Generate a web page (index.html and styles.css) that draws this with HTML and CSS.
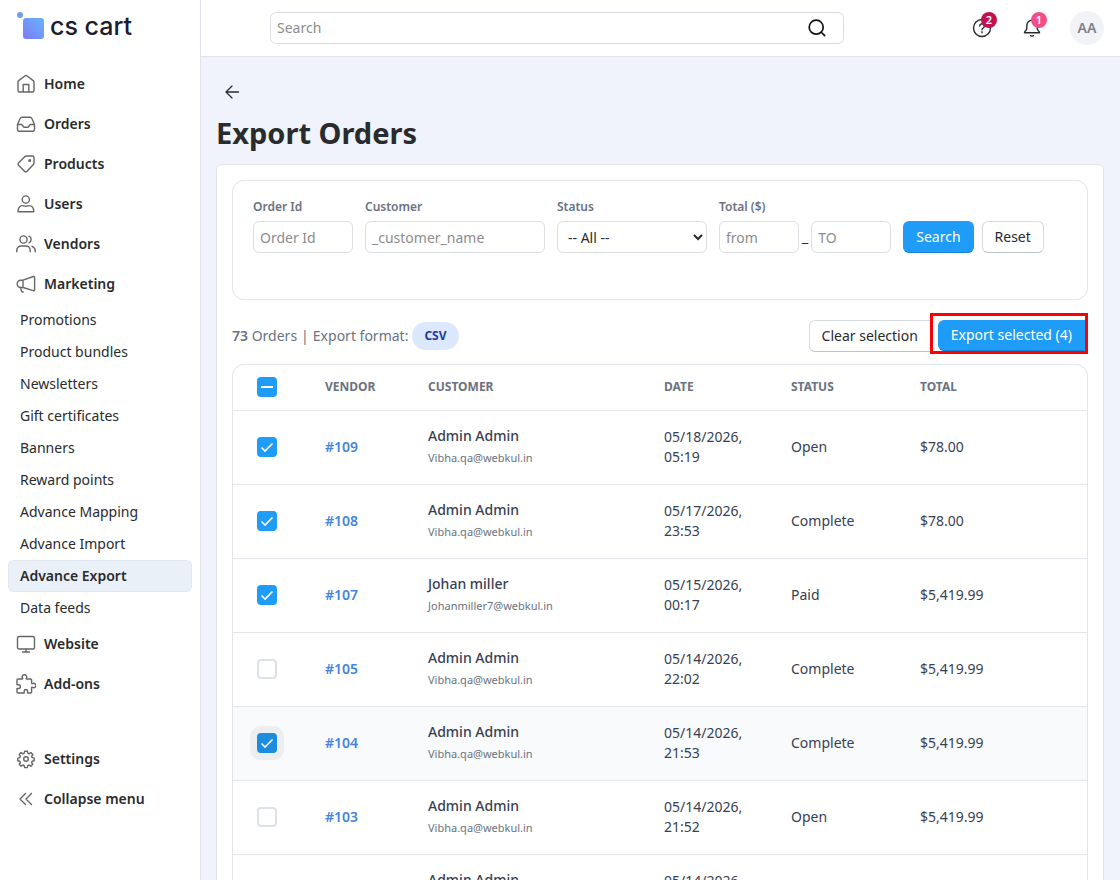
FILE: index.html
```html
<!DOCTYPE html>
<html lang="en">

<head>
    <meta charset="UTF-8">
    <meta name="viewport" content="width=device-width, initial-scale=1.0">
    <title>Export Orders</title>
    <link rel="stylesheet" href="styles.css">
</head>

<body>
    <aside class="sidebar">
        <a href="#" class="logo">
            <svg width="28" height="28" viewBox="0 0 28 28">
                <defs>
                    <linearGradient id="logoFill" x1="1" y1="0" x2="0" y2="1">
                        <stop offset="0" stop-color="#6bb2fb" />
                        <stop offset="1" stop-color="#7b7cfa" />
                    </linearGradient>
                </defs>
                <circle cx="4" cy="3" r="3" fill="#6f9df0" />
                <rect x="7" y="6" width="21" height="21" rx="3" fill="url(#logoFill)" />
            </svg>
            <span>cs cart</span>
        </a>

        <nav class="menu">
            <a href="#" class="menu-item">
                <svg class="icon" viewBox="0 0 20 20"><path d="M2 8.2v8.3A1.5 1.5 0 0 0 3.5 18h13a1.5 1.5 0 0 0 1.5-1.5V8.200a2 2 0 0 0-.8-1.600l-6-4.600a2 2 0 0 0-2.400 0l-6 4.600A2 2 0 0 0 2 8.200zM7.200 18v-7.500h5.600V18" /></svg>
                Home
            </a>
            <a href="#" class="menu-item">
                <svg class="icon" viewBox="0 0 20 20"><path d="M1.500 10.500v5a1.700 1.700 0 0 0 1.700 1.700h13.600a1.700 1.700 0 0 0 1.700-1.700v-5l-2.600-6a2 2 0 0 0-1.900-1.300H6a2 2 0 0 0-1.900 1.300zM1.500 10.500h4.200c.8 0 1.300 2.700 2.400 2.700h3.800c1.100 0 1.600-2.700 2.400-2.700h4.200" /></svg>
                Orders
            </a>
            <a href="#" class="menu-item">
                <svg class="icon" viewBox="0 0 20 20"><path d="M10.300 2h6.200A1.500 1.500 0 0 1 18 3.500v5.600a2 2 0 0 1-.6 1.400l-6.600 6.900a1.500 1.500 0 0 1-2.100 0L2.500 11.200a1.500 1.500 0 0 1 0-2.100l6.400-6.500a2 2 0 0 1 1.400-.6z" /><circle cx="13.700" cy="6.400" r=".8" fill="#6b6b6b" /></svg>
                Products
            </a>
            <a href="#" class="menu-item">
                <svg class="icon" viewBox="0 0 20 20"><circle cx="9.800" cy="5.500" r="3.600" /><path d="M2 17.800c0-3.600 1.500-6.200 4.700-6.200 1 0 1.500.7 3.100.7s2.100-.7 3.100-.7c3.200 0 4.900 2.600 4.900 6.200z" /></svg>
                Users
            </a>
            <a href="#" class="menu-item">
                <svg class="icon" viewBox="0 0 20 20"><circle cx="7.500" cy="5.500" r="3.600" /><path d="M.8 17.800v-1.600a4.200 4.200 0 0 1 4.200-4.200h5a4.200 4.200 0 0 1 4.200 4.200v1.600M13 2.200a3.600 3.600 0 0 1 0 6.600M16 12.300c2 .8 3.200 2.300 3.200 4.300v1.200" /></svg>
                Vendors
            </a>
            <a href="#" class="menu-item">
                <svg class="icon" viewBox="0 0 20 20"><path d="M7 6.200 17.400 2.500a.9.9 0 0 1 1.200.8v12.600a.9.900 0 0 1-1.200.8L7 13.500M7 6.200v7.300M7 6.200H4.800a3.600 3.600 0 0 0 0 7.300H7M4.500 13.500l.8 3.200a1.700 1.700 0 0 0 1.900 1.300" /></svg>
                Marketing
            </a>

            <div class="submenu">
                <a href="#">Promotions</a>
                <a href="#">Product bundles</a>
                <a href="#">Newsletters</a>
                <a href="#">Gift certificates</a>
                <a href="#">Banners</a>
                <a href="#">Reward points</a>
                <a href="#">Advance Mapping</a>
                <a href="#">Advance Import</a>
                <a href="#" class="active">Advance Export</a>
                <a href="#">Data feeds</a>
            </div>

            <a href="#" class="menu-item">
                <svg class="icon" viewBox="0 0 20 20"><rect x="1.500" y="2.500" width="17" height="12.500" rx="1.500" /><path d="M10 15v3M6.500 18h7" /></svg>
                Website
            </a>
            <a href="#" class="menu-item">
                <svg class="icon" viewBox="0 0 20 20"><path d="M2 5h4.300c.4 0 .5-.4.400-.7a2.200 2.200 0 1 1 3.500 0c-.1.300 0 .7.400.7h4a1 1 0 0 1 1 1v3.300c0 .400.400.500.700.400a2.200 2.200 0 1 1 0 3.500c-.3-.1-.7 0-.7.400V18a1 1 0 0 1-1 1h-3v-1.800a1.700 1.700 0 0 0-3.400 0V19H2a1 1 0 0 1-1-1v-3.500h1.500a1.900 1.900 0 0 0 0-3.800H1V6a1 1 0 0 1 1-1z" /></svg>
                Add-ons
            </a>
        </nav>

        <nav class="menu menu-bottom">
            <a href="#" class="menu-item">
                <svg class="icon" viewBox="0 0 20 20"><circle cx="10" cy="10" r="2.300" /><path d="M8.700 2.200h2.600l.5 2 1.300.6 1.800-1.200 1.900 1.900-1.200 1.800.6 1.300 2 .5v2.600l-2 .5-.6 1.300 1.200 1.800-1.900 1.900-1.800-1.200-1.300.6-.5 2H8.700l-.5-2-1.300-.6-1.800 1.200-1.900-1.900 1.200-1.800-.6-1.300-2-.5V9.100l2-.5.6-1.300-1.200-1.800 1.900-1.900 1.800 1.200 1.300-.6z" /></svg>
                Settings
            </a>
            <a href="#" class="menu-item">
                <svg class="icon" viewBox="0 0 20 20"><path d="M9.500 4.500 4 10l5.500 5.500M15.500 4.500 10 10l5.500 5.500" /></svg>
                Collapse menu
            </a>
        </nav>
    </aside>

    <div class="page">
        <header class="topbar">
            <form class="search">
                <input type="text" placeholder="Search" aria-label="Search">
                <button type="button" aria-label="Run search">
                    <svg width="20" height="20" viewBox="0 0 20 20"><circle cx="9.200" cy="9.200" r="7" /><path d="m14.500 14.500 3.200 3.200" /></svg>
                </button>
            </form>
            <div class="tools">
                <div class="tool-group">
                    <button class="tool" aria-label="Help">
                        <svg width="20" height="20" viewBox="0 0 20 20"><circle cx="10" cy="10" r="8.500" /><path d="M7.700 8a2.300 2.300 0 1 1 3.500 2c-.8.500-1.200.9-1.200 1.700M10 13.800v1" /></svg>
                        <span class="badge badge-dark">2</span>
                    </button>
                    <button class="tool" aria-label="Notifications">
                        <svg width="20" height="20" viewBox="0 0 20 20"><path d="M10 2.300a5.200 5.200 0 0 0-5.200 5.200v2.700c0 1-.5 1.700-1.200 2.500-.7.700-1.100 1.300-1.100 2h15c0-.7-.4-1.300-1.100-2-.7-.8-1.200-1.500-1.200-2.500V7.500A5.200 5.200 0 0 0 10 2.300zM8.600 17.700q1.400.8 2.800 0" /></svg>
                        <span class="badge">1</span>
                    </button>
                </div>
                <button class="avatar">AA</button>
            </div>
        </header>

        <main class="content">
            <a href="#" class="back" aria-label="Back">
                <svg width="16" height="16" viewBox="0 0 16 16"><path d="M14.500 8H2M8 2 2 8l6 6" /></svg>
            </a>
            <h1>Export Orders</h1>

            <div class="card">
                <form class="filters">
                    <div class="field field-id">
                        <label for="orderId">Order Id</label>
                        <input type="text" id="orderId" placeholder="Order Id">
                    </div>
                    <div class="field field-customer">
                        <label for="customer">Customer</label>
                        <input type="text" id="customer" placeholder="_customer_name">
                    </div>
                    <div class="field field-status">
                        <label for="status">Status</label>
                        <select id="status">
                            <option>-- All --</option>
                            <option>Open</option>
                            <option>Complete</option>
                            <option>Paid</option>
                        </select>
                    </div>
                    <div class="field">
                        <label for="totalFrom">Total ($)</label>
                        <div class="range">
                            <input type="text" id="totalFrom" placeholder="from">
                            <span>_</span>
                            <input type="text" placeholder="TO" aria-label="Total to">
                        </div>
                    </div>
                    <div class="filter-buttons">
                        <button type="button" class="btn btn-primary">Search</button>
                        <button type="button" class="btn">Reset</button>
                    </div>
                </form>

                <div class="toolbar">
                    <div class="summary">
                        <span><b>73</b> Orders</span>
                        <span>|</span>
                        <span>Export format:</span>
                        <span class="format">CSV</span>
                    </div>
                    <div class="actions">
                        <button class="btn">Clear selection</button>
                        <div class="highlight">
                            <button class="btn btn-primary">Export selected (4)</button>
                        </div>
                    </div>
                </div>

                <div class="table-box">
                    <table class="orders">
                        <colgroup>
                            <col class="col-check">
                            <col class="col-vendor">
                            <col class="col-customer">
                            <col class="col-date">
                            <col class="col-status">
                            <col>
                        </colgroup>
                        <thead>
                            <tr>
                                <th><input type="checkbox" class="partial" aria-label="Select all"></th>
                                <th>Vendor</th>
                                <th>Customer</th>
                                <th>Date</th>
                                <th>Status</th>
                                <th>Total</th>
                            </tr>
                        </thead>
                        <tbody>
                            <tr>
                                <td><input type="checkbox" aria-label="Select #109" checked></td>
                                <td><a href="#">#109</a></td>
                                <td><strong>Admin Admin</strong><small>Vibha.qa@webkul.in</small></td>
                                <td>05/18/2026, 05:19</td>
                                <td>Open</td>
                                <td>$78.00</td>
                            </tr>
                            <tr>
                                <td><input type="checkbox" aria-label="Select #108" checked></td>
                                <td><a href="#">#108</a></td>
                                <td><strong>Admin Admin</strong><small>Vibha.qa@webkul.in</small></td>
                                <td>05/17/2026, 23:53</td>
                                <td>Complete</td>
                                <td>$78.00</td>
                            </tr>
                            <tr>
                                <td><input type="checkbox" aria-label="Select #107" checked></td>
                                <td><a href="#">#107</a></td>
                                <td><strong>Johan miller</strong><small>Johanmiller7@webkul.in</small></td>
                                <td>05/15/2026, 00:17</td>
                                <td>Paid</td>
                                <td>$5,419.99</td>
                            </tr>
                            <tr>
                                <td><input type="checkbox" aria-label="Select #105"></td>
                                <td><a href="#">#105</a></td>
                                <td><strong>Admin Admin</strong><small>Vibha.qa@webkul.in</small></td>
                                <td>05/14/2026, 22:02</td>
                                <td>Complete</td>
                                <td>$5,419.99</td>
                            </tr>
                            <tr class="current">
                                <td><input type="checkbox" aria-label="Select #104" checked></td>
                                <td><a href="#">#104</a></td>
                                <td><strong>Admin Admin</strong><small>Vibha.qa@webkul.in</small></td>
                                <td>05/14/2026, 21:53</td>
                                <td>Complete</td>
                                <td>$5,419.99</td>
                            </tr>
                            <tr>
                                <td><input type="checkbox" aria-label="Select #103"></td>
                                <td><a href="#">#103</a></td>
                                <td><strong>Admin Admin</strong><small>Vibha.qa@webkul.in</small></td>
                                <td>05/14/2026, 21:52</td>
                                <td>Open</td>
                                <td>$5,419.99</td>
                            </tr>
                            <tr>
                                <td><input type="checkbox" aria-label="Select #102"></td>
                                <td><a href="#">#102</a></td>
                                <td><strong>Admin Admin</strong><small>Vibha.qa@webkul.in</small></td>
                                <td>05/14/2026, 21:50</td>
                                <td>Open</td>
                                <td>$5,419.99</td>
                            </tr>
                        </tbody>
                    </table>
                </div>
            </div>
        </main>
    </div>
</body>

</html>
```

FILE: styles.css
```css
* {
    margin: 0;
    padding: 0;
    box-sizing: border-box;
}

body {
    display: flex;
    height: 100vh;
    overflow: hidden;
    background-color: #f0f3fb;
    color: #292b2c;
    font-family: "Noto Sans", sans-serif;
    font-size: 14px;
    line-height: 20px;
}

a {
    color: inherit;
    text-decoration: none;
}

button,
input,
select {
    font: inherit;
    color: inherit;
}

button {
    cursor: pointer;
}

svg {
    display: block;
    fill: none;
    stroke: currentColor;
    stroke-linecap: round;
    stroke-linejoin: round;
}

/* sidebar */
.sidebar {
    flex: 0 0 201px;
    background-color: #fff;
    border-right: 1px solid #dfe3ea;
    overflow: hidden;
}

.logo {
    display: flex;
    align-items: center;
    gap: 6px;
    height: 64px;
    padding: 0 16px 12px;
    color: #1b1c2e;
    font-family: Inter, sans-serif;
    font-size: 25px;
    font-weight: 500;
}

.logo svg {
    stroke: none;
}

.menu-item {
    display: flex;
    align-items: center;
    gap: 8px;
    height: 40px;
    padding: 0 16px;
    font-weight: 600;
}

.icon {
    width: 20px;
    height: 20px;
    color: #666;
    stroke-width: 1.4;
}

.submenu a {
    display: block;
    margin: 0 8px;
    padding: 6px 12px;
    border-radius: 6px;
}

.submenu .active {
    background-color: #eaf0f8;
    box-shadow: inset 0 0 0 1px #e1e7f0;
    font-weight: 600;
}

.menu-bottom {
    margin-top: 35px;
}

/* top bar */
.page {
    flex: 1;
    min-width: 0;
    display: flex;
    flex-direction: column;
}

.topbar {
    display: flex;
    justify-content: space-between;
    align-items: center;
    flex: 0 0 57px;
    padding: 0 16px 0 69px;
    background-color: #fff;
    border-bottom: 1px solid #dfe3ea;
}

.search {
    display: flex;
    align-items: center;
    flex: 0 1 574px;
    height: 32px;
    padding: 0 16px 0 6px;
    border: 1px solid #d9dde2;
    border-radius: 6px;
}

.search input {
    flex: 1;
    min-width: 0;
    border: none;
    outline: 0;
    background: none;
}

.search button {
    border: none;
    background: none;
    color: #111;
}

.search svg {
    stroke-width: 1.7;
}

::placeholder {
    color: #8c8c8c;
}

.tools {
    display: flex;
    align-items: center;
    gap: 28px;
}

.tool-group {
    display: flex;
    gap: 30px;
}

.tool {
    position: relative;
    border: none;
    background: none;
}

.tool svg {
    stroke-width: 1.4;
}

.badge {
    position: absolute;
    top: -6px;
    right: -5px;
    width: 16px;
    height: 16px;
    border-radius: 50%;
    background-color: #f04f8b;
    color: #fff;
    font-size: 11px;
    font-weight: 600;
    line-height: 16px;
}

.badge-dark {
    background-color: #c4104f;
}

.avatar {
    width: 34px;
    height: 34px;
    border: none;
    border-radius: 50%;
    background-color: #f1f3f9;
    color: #7d7f84;
    font-weight: 600;
}

/* content */
.content {
    flex: 1;
    min-height: 0;
    padding: 19px 16px 0 15px;
    overflow-y: auto;
    scrollbar-width: none;
}

.back {
    display: flex;
    align-items: center;
    width: 32px;
    height: 32px;
    padding-left: 8px;
}

.back svg {
    stroke-width: 1.3;
}

h1 {
    margin: 5px 0 11px;
    font-size: 29px;
    font-weight: 700;
    line-height: 40px;
}

.card {
    padding: 15px;
    background-color: #fff;
    border: 1px solid #dfe3ea;
    border-radius: 6px;
}

.filters {
    display: flex;
    gap: 12px;
    min-height: 120px;
    padding: 16px 20px;
    border: 1px solid #e1e5ea;
    border-radius: 12px;
}

.field label {
    display: block;
    margin-bottom: 4px;
    color: #6b7280;
    font-size: 12px;
    font-weight: 600;
}

.field input,
.field select {
    width: 100%;
    height: 32px;
    padding: 0 6px;
    background-color: #fff;
    border: 1px solid #dcdfe4;
    border-radius: 6px;
}

.field-id {
    width: 100px;
}

.field-customer {
    width: 180px;
}

.field-status {
    width: 150px;
}

.range {
    display: flex;
    align-items: center;
    gap: 3px;
}

.range input {
    width: 80px;
}

.filter-buttons {
    display: flex;
    gap: 8px;
    padding-top: 24px;
}

.btn {
    height: 32px;
    padding: 0 12px;
    background-color: #fff;
    border: 1px solid #d5d9e0;
    border-bottom-color: #bfc4cc;
    border-radius: 6px;
    white-space: nowrap;
}

.btn-primary {
    background-color: #1e9cf7;
    border-color: #1e9cf7;
    border-bottom-color: #1880d0;
    color: #fff;
}

.toolbar {
    display: flex;
    justify-content: space-between;
    align-items: center;
    height: 64px;
    padding-top: 7px;
}

.summary {
    display: flex;
    align-items: center;
    gap: 4px;
    color: #6b7280;
}

.summary b {
    font-weight: 600;
}

.format {
    padding: 4px 12px;
    border-radius: 14px;
    background-color: #dbe8fd;
    color: #1e3a9e;
    font-size: 12px;
    font-weight: 700;
}

.actions {
    display: flex;
    align-items: flex-start;
    height: 32px;
}

.actions > .btn {
    border-right: none;
    border-radius: 6px 0 0 6px;
}

.highlight {
    margin-top: -7px;
    padding: 4px 0 0 5px;
    border: 3px solid #fb0007;
}

.highlight .btn {
    display: block;
    height: 31px;
    border-radius: 6px 0 0 6px;
}

/* orders table */
.table-box {
    border: 1px solid #e1e5ea;
    border-radius: 12px;
    overflow: hidden;
}

.orders {
    width: 100%;
    table-layout: fixed;
    border-collapse: collapse;
}

.col-check {
    width: 68px;
}

.col-vendor {
    width: 103px;
}

.col-customer {
    width: 236px;
}

.col-date {
    width: 127px;
}

.col-status {
    width: 129px;
}

.orders th,
.orders td {
    padding: 0 0 0 24px;
    border-bottom: 1px solid #e4e7eb;
    text-align: left;
}

.orders th {
    height: 45px;
    color: #6b7280;
    font-size: 12px;
    font-weight: 700;
    text-transform: uppercase;
}

.orders td {
    height: 74px;
    color: #374151;
}

.orders td a {
    color: #4484e0;
    font-weight: 600;
}

.orders strong {
    display: block;
    font-weight: 500;
}

.orders small {
    display: block;
    margin-top: 2px;
    color: #6b7280;
    font-size: 11px;
}

.orders .current {
    background-color: #f9fafc;
}

input[type="checkbox"] {
    display: block;
    appearance: none;
    width: 20px;
    height: 20px;
    border: 2px solid #dde1e8;
    border-radius: 4px;
    background: #fff center / 20px 20px no-repeat;
}

input[type="checkbox"]:checked,
input[type="checkbox"].partial {
    border-color: #1e9cf7;
    background-color: #1e9cf7;
}

input[type="checkbox"]:checked {
    background-image: url("data:image/svg+xml,%3Csvg xmlns='http://www.w3.org/2000/svg' viewBox='0 0 20 20'%3E%3Cpath d='M4.500 10.500l3.500 3.500 7.500-7.500' fill='none' stroke='white' stroke-width='1.600'/%3E%3C/svg%3E");
}

input[type="checkbox"].partial {
    background-image: url("data:image/svg+xml,%3Csvg xmlns='http://www.w3.org/2000/svg' viewBox='0 0 20 20'%3E%3Cpath d='M4 10h12' stroke='white' stroke-width='2'/%3E%3C/svg%3E");
}

.current input[type="checkbox"] {
    border-color: #1a8de0;
    background-color: #1a8de0;
    box-shadow: 0 0 0 7px #eceef0;
}
```
